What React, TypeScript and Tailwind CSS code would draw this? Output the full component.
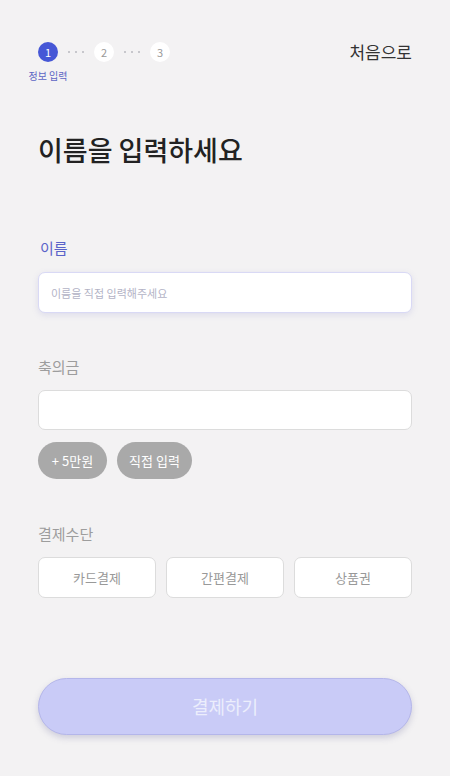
import { useState } from "react";

const font = { fontFamily: '"Noto Sans CJK KR", "Noto Sans", sans-serif' };

function Dots() {
  return (
    <div className="flex w-[36px] items-center justify-center gap-[5px]">
      <span className="h-[2px] w-[2px] rounded-full bg-[#b9b9bf]" />
      <span className="h-[2px] w-[2px] rounded-full bg-[#b9b9bf]" />
      <span className="h-[2px] w-[2px] rounded-full bg-[#b9b9bf]" />
    </div>
  );
}

export default function App() {
  const [name, setName] = useState("");
  const [amount, setAmount] = useState("");
  const methods = ["카드결제", "간편결제", "상품권"];

  return (
    <main
      style={font}
      className="flex min-h-[776px] w-full flex-col bg-[#f3f2f3] px-[38px] pt-[42px]"
    >
      <header className="flex items-start justify-between">
        <div className="flex items-start">
          <div className="flex w-[20px] flex-col items-center">
            <div className="flex h-[20px] w-[20px] items-center justify-center rounded-full bg-[#4657d6] text-[11px] text-white">
              1
            </div>
            <span className="mt-[7px] whitespace-nowrap text-[10px] leading-[14px] text-[#5d66c4]">
              정보 입력
            </span>
          </div>
          <div className="flex h-[20px] items-center">
            <Dots />
            <div className="flex h-[20px] w-[20px] items-center justify-center rounded-full bg-white text-[11px] text-[#9a9a9a]">
              2
            </div>
            <Dots />
            <div className="flex h-[20px] w-[20px] items-center justify-center rounded-full bg-white text-[11px] text-[#9a9a9a]">
              3
            </div>
          </div>
        </div>
        <button className="mt-[-2px] text-[17px] leading-[24px] text-[#333]">처음으로</button>
      </header>

      <h1 className="mt-[49px] text-[27px] font-medium leading-[36px] text-[#222]">
        이름을 입력하세요
      </h1>

      <label className="mt-[70px] pl-[2px] text-[15px] leading-[20px] text-[#5a63c9]">이름</label>
      <input
        value={name}
        onChange={(e) => setName(e.target.value)}
        placeholder="이름을 직접 입력해주세요"
        className="mt-[14px] h-[41px] w-full rounded-[7px] border border-[#d9d9f5] bg-white px-[12px] text-[11px] text-[#333] shadow-[0_2px_6px_rgba(120,120,200,0.18)] outline-none placeholder:text-[#b3b3c6]"
      />

      <label className="mt-[44px] text-[15px] leading-[20px] text-[#9d9d9d]">축의금</label>
      <input
        value={amount}
        onChange={(e) => setAmount(e.target.value)}
        className="mt-[13px] h-[40px] w-full rounded-[7px] border border-[#dcdcdc] bg-white px-[12px] text-[13px] outline-none"
      />
      <div className="mt-[12px] flex gap-[10px]">
        <button className="h-[37px] w-[69px] rounded-full bg-[#a9a9a9] text-[13px] text-white">
          + 5만원
        </button>
        <button className="h-[37px] w-[75px] rounded-full bg-[#a9a9a9] text-[13px] text-white">
          직접 입력
        </button>
      </div>

      <label className="mt-[45px] text-[15px] leading-[20px] text-[#9d9d9d]">결제수단</label>
      <div className="mt-[13px] grid grid-cols-3 gap-[10px]">
        {methods.map((m) => (
          <button
            key={m}
            className="h-[41px] rounded-[7px] border border-[#dcdcdc] bg-white text-[13px] text-[#999]"
          >
            {m}
          </button>
        ))}
      </div>

      <button className="mt-[80px] h-[57px] w-full rounded-full border border-[#b4b6ea] bg-[#c9cbf7] text-[18px] text-[#eceefc] shadow-[0_3px_6px_rgba(100,100,150,0.25)]">
        결제하기
      </button>
    </main>
  );
}
